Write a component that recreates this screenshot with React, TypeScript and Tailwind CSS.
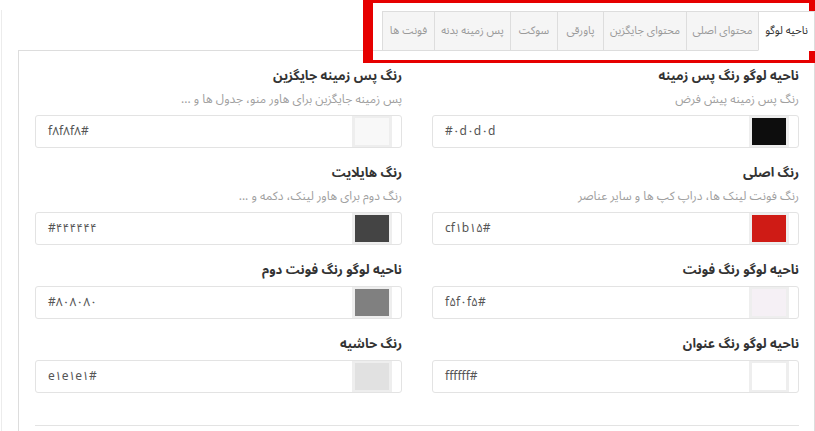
import React from "react";

// ---- tabs (right to left)
const tabs: { label: string; w: string; active?: boolean }[] = [
  { label: "ناحیه لوگو", w: "w-[57px]", active: true },
  { label: "محتوای اصلی", w: "w-[72px]" },
  { label: "محتوای جایگزین", w: "w-[83px]" },
  { label: "پاورقی", w: "w-[46px]" },
  { label: "سوکت", w: "w-[47px]" },
  { label: "پس زمینه بدنه", w: "w-[76px]" },
  { label: "فونت ها", w: "w-[52px]" },
];

type Field = { title: string; desc?: string; value: string; color: string };

// order: right column first (rtl grid)
const fields: Field[] = [
  { title: "ناحیه لوگو رنگ پس زمینه", desc: "رنگ پس زمینه پیش فرض", value: "#۰d۰d۰d", color: "bg-[#0d0d0d]" },
  { title: "رنگ پس زمینه جایگزین", desc: "پس زمینه جایگزین برای هاور منو، جدول ها و ...", value: "f۸f۸f۸#", color: "bg-[#f8f8f8]" },
  { title: "رنگ اصلی", desc: "رنگ فونت لینک ها، دراپ کپ ها و سایر عناصر", value: "cf۱b۱۵#", color: "bg-[#cf1b15]" },
  { title: "رنگ هایلایت", desc: "رنگ دوم برای هاور لینک، دکمه و ...", value: "#۴۴۴۴۴۴", color: "bg-[#444444]" },
  { title: "ناحیه لوگو رنگ فونت", value: "f۵f۰f۵#", color: "bg-[#f5f0f5]" },
  { title: "ناحیه لوگو رنگ فونت دوم", value: "#۸۰۸۰۸۰", color: "bg-[#808080]" },
  { title: "ناحیه لوگو رنگ عنوان", value: "ffffff#", color: "bg-[#ffffff]" },
  { title: "رنگ حاشیه", value: "e۱e۱e۱#", color: "bg-[#e1e1e1]" },
];

function ColorField({ title, desc, value, color }: Field) {
  return (
    <div className="flex flex-col">
      <div className="h-[18px] text-[13px] font-bold leading-[18px] text-[#333]">{title}</div>
      {desc && (
        <div className="mt-[6px] h-[18px] text-[12px] leading-[18px] text-[#a0a0a0]">{desc}</div>
      )}
      <div className={`${desc ? "mt-[6px]" : "mt-[7px]"} flex h-[33px] items-stretch rounded-[3px] border border-[#e3e3e3] bg-white`}>
        <div className="mr-[9px] w-[40px] bg-[#eeeeee] px-[3px] py-[2px]">
          <div className={`h-full w-full ${color}`} />
        </div>
        <div className="flex flex-1 items-center justify-end pl-[12px]">
          <span dir="ltr" className="text-[12px] text-[#555]">
            {value}
          </span>
        </div>
      </div>
    </div>
  );
}

export default function App() {
  return (
    <div
      dir="rtl"
      className="relative h-[431px] w-[815px] overflow-hidden bg-white"
      style={{ fontFamily: '"Noto Sans Arabic", "DejaVu Sans", Tahoma, sans-serif' }}
    >
      <div className="mt-[10px] ml-[1px] h-[421px] border-l border-[#ececec] pt-px pl-[16px]">
        {/* TABS */}
        <ul className="relative z-10 -mb-px flex">
          {tabs.map((t) => (
            <li
              key={t.label}
              className={`flex h-[40px] items-center justify-center border-t border-l text-[11px] ${t.w} ${
                t.active
                  ? "border-r border-[#dddddd] border-b border-b-white bg-white text-[#333]"
                  : "border-b border-[#dddddd] bg-[#f5f5f5] text-[#9a9a9a]"
              }`}
            >
              {t.label}
            </li>
          ))}
        </ul>

        {/* PANEL */}
        <div className="h-[400px] border-t border-r border-l border-[#dddddd] pt-[16px] pr-[15px] pl-[16px]">
          <div className="grid grid-cols-2 gap-x-[30px] gap-y-[16px]">
            {fields.map((f) => (
              <ColorField key={f.title} {...f} />
            ))}
          </div>
          <div className="mt-[32px] border-t border-[#e3e3e3]" />
        </div>
      </div>

      {/* red annotation frame */}
      <div className="pointer-events-none absolute top-0 left-[363px] h-[63px] w-[452px] border-t-[3px] border-r-[6px] border-b-[3px] border-l-[10px] border-[#e60000]" />
    </div>
  );
}
